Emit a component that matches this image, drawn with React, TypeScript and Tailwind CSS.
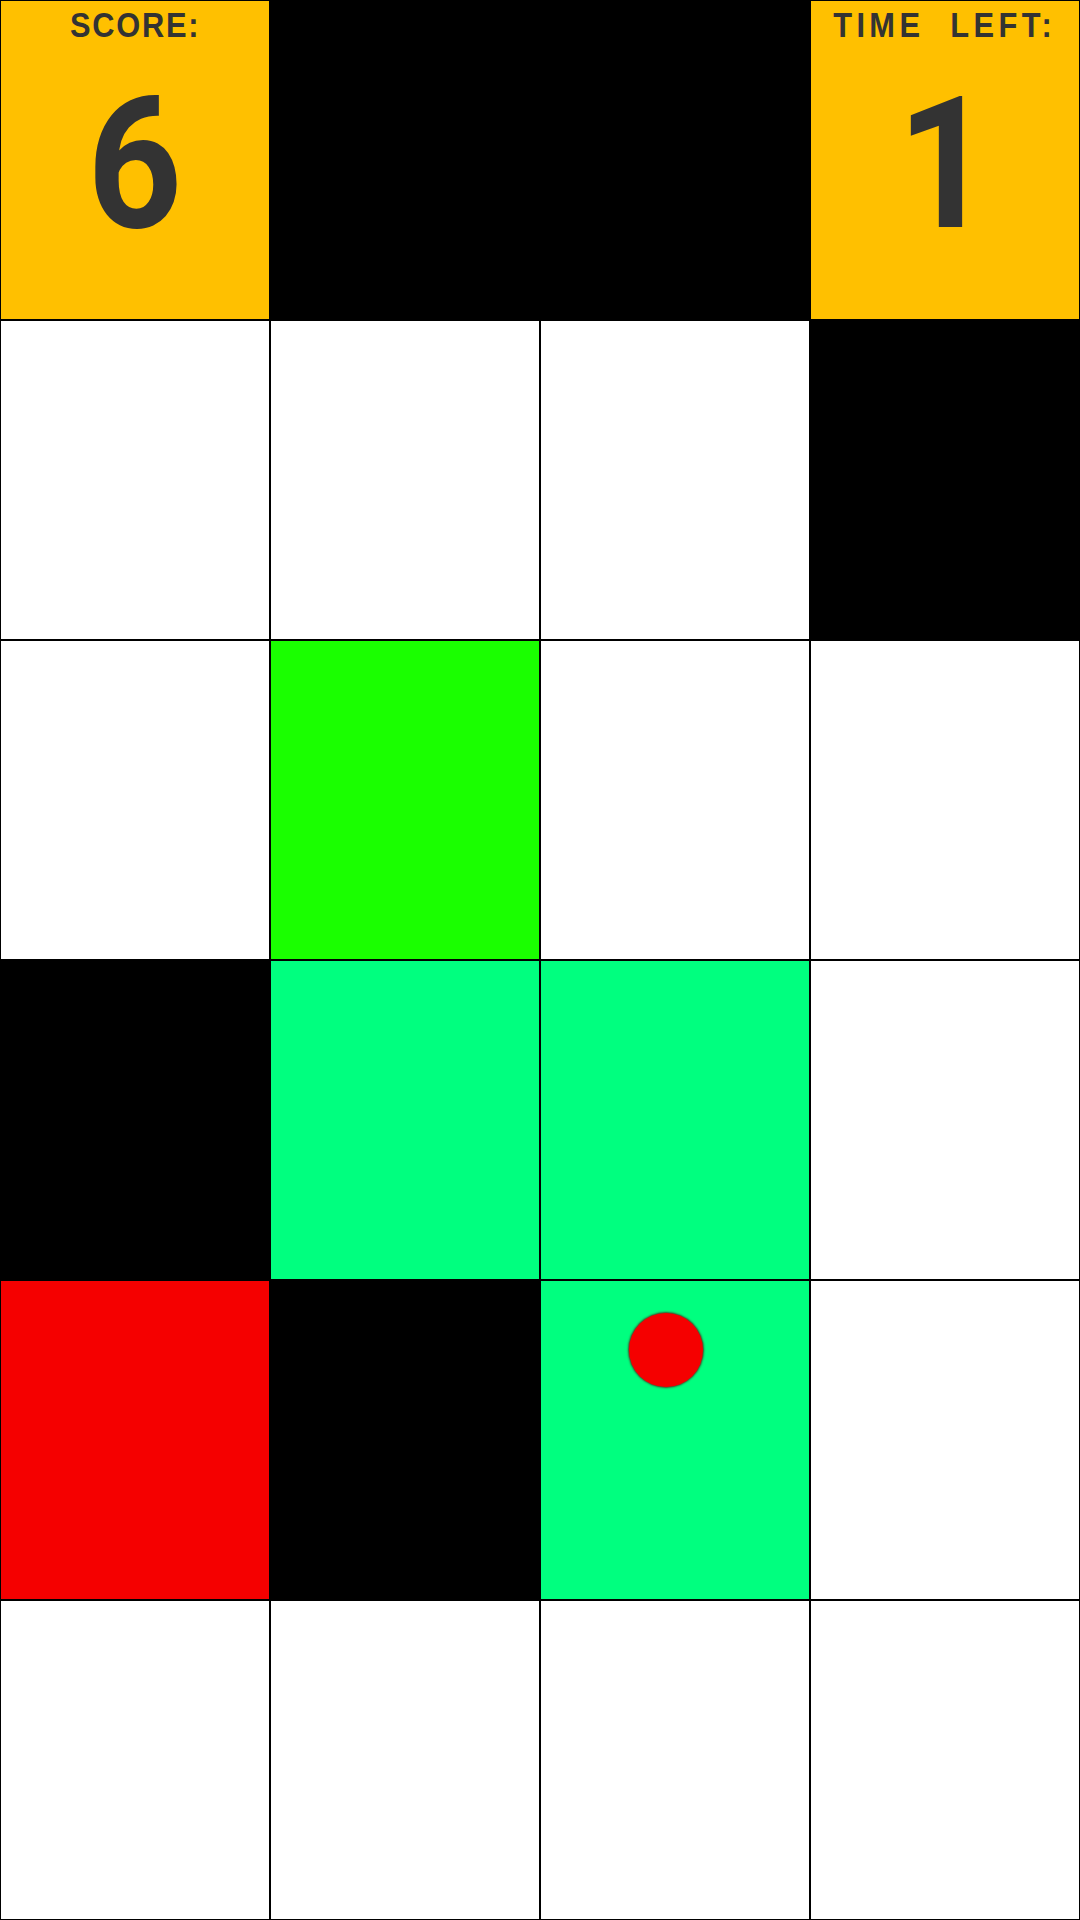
const W = 'bg-white'
const K = 'bg-black'
const G = 'bg-[#1aff00]'
const M = 'bg-[#00ff7f]'
const R = 'bg-[#f50000]'

// rows 1..5 of the board (row 0 is the header)
const board: string[][] = [
  [W, W, W, K],
  [W, G, W, W],
  [K, M, M, W],
  [R, K, M, W],
  [W, W, W, W],
]

const labelFont = { fontFamily: '"Liberation Sans", Arial, sans-serif' }
const numberFont = { fontFamily: 'Roboto, "Liberation Sans", sans-serif' }

function InfoCell({ label, value, spacing }: { label: string; value: string; spacing: string }) {
  return (
    <div className="h-[320px] border border-black bg-[#ffc000] flex flex-col items-center text-[#333333]">
      <div className={`text-[35px] leading-none font-bold mt-[6px] whitespace-pre scale-x-[0.88] ${spacing}`} style={labelFont}>
        {label}
      </div>
      <div className="text-[184px] leading-none font-bold mt-[30px] scale-x-[0.9]" style={numberFont}>
        {value}
      </div>
    </div>
  )
}

export default function App() {
  return (
    <div className="w-[1080px] h-[1920px] overflow-hidden bg-white grid grid-cols-4">
      <InfoCell label="SCORE:" value="6" spacing="tracking-[2px]" />
      <div className="h-[320px] border border-black bg-black" />
      <div className="h-[320px] border border-black bg-black" />
      <InfoCell label="TIME  LEFT:" value="1" spacing="tracking-[5px]" />
      {board.map((row, r) =>
        row.map((c, i) => (
          <div key={`${r}-${i}`} className={`h-[320px] border border-black relative ${c}`}>
            {r === 3 && i === 2 && (
              <div className="absolute left-[88px] top-[32px] w-[74px] h-[74px] rounded-full bg-[#f50000] shadow-[0_0_2px_1px_rgba(90,20,20,0.8)]" />
            )}
          </div>
        ))
      )}
    </div>
  )
}
